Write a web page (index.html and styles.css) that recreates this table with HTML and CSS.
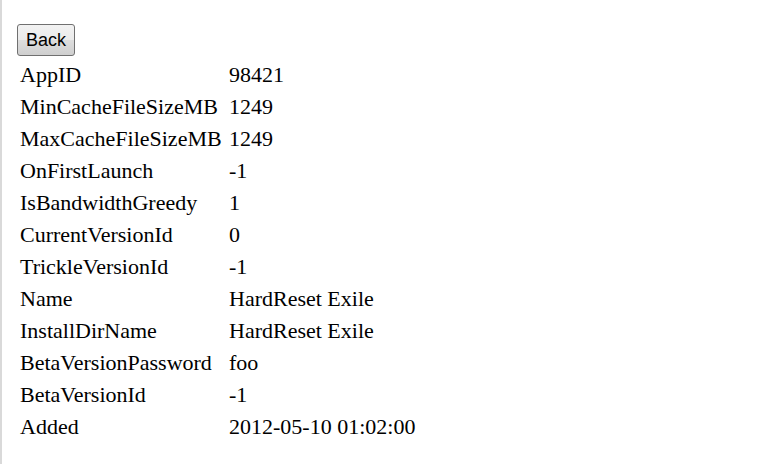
FILE: index.html
```html
<!DOCTYPE html>
<html>
<head>
<meta charset="utf-8">
<link rel="stylesheet" href="styles.css">
</head>
<body>
<div class="page">
  <button class="back">Back</button>
  <div class="props">
    <div class="k">AppID</div><div class="v">98421</div>
    <div class="k">MinCacheFileSizeMB</div><div class="v">1249</div>
    <div class="k">MaxCacheFileSizeMB</div><div class="v">1249</div>
    <div class="k">OnFirstLaunch</div><div class="v">-1</div>
    <div class="k">IsBandwidthGreedy</div><div class="v">1</div>
    <div class="k">CurrentVersionId</div><div class="v">0</div>
    <div class="k">TrickleVersionId</div><div class="v">-1</div>
    <div class="k">Name</div><div class="v">HardReset Exile</div>
    <div class="k">InstallDirName</div><div class="v">HardReset Exile</div>
    <div class="k">BetaVersionPassword</div><div class="v">foo</div>
    <div class="k">BetaVersionId</div><div class="v">-1</div>
    <div class="k">Added</div><div class="v">2012-05-10 01:02:00</div>
  </div>
</div>
</body>
</html>
```
FILE: styles.css
```css
html, body {
  margin: 0;
  padding: 0;
  background: #fff;
}
body {
  width: 764px;
  height: 464px;
  box-sizing: border-box;
  border-left: 2px solid #d9d9d9;
  overflow: hidden;
}
.page {
  padding: 24px 0 0 15px;
}
.back {
  display: block;
  width: 58px;
  height: 32px;
  margin: 0;
  padding: 0;
  font-family: "Liberation Sans", Arial, sans-serif;
  font-size: 18px;
  color: #000;
  border: 1px solid #707070;
  border-radius: 3px;
  background: linear-gradient(#f2f2f2 0%, #ebebeb 50%, #dddddd 51%, #cfcfcf 100%);
}
.props {
  display: grid;
  grid-template-columns: 209px auto;
  grid-auto-rows: 32px;
  margin-left: 3px;
  padding-top: 3px;
  font-family: "Liberation Serif", "Times New Roman", serif;
  font-size: 22px;
  color: #000;
}
.props div {
  line-height: 32px;
}
```
